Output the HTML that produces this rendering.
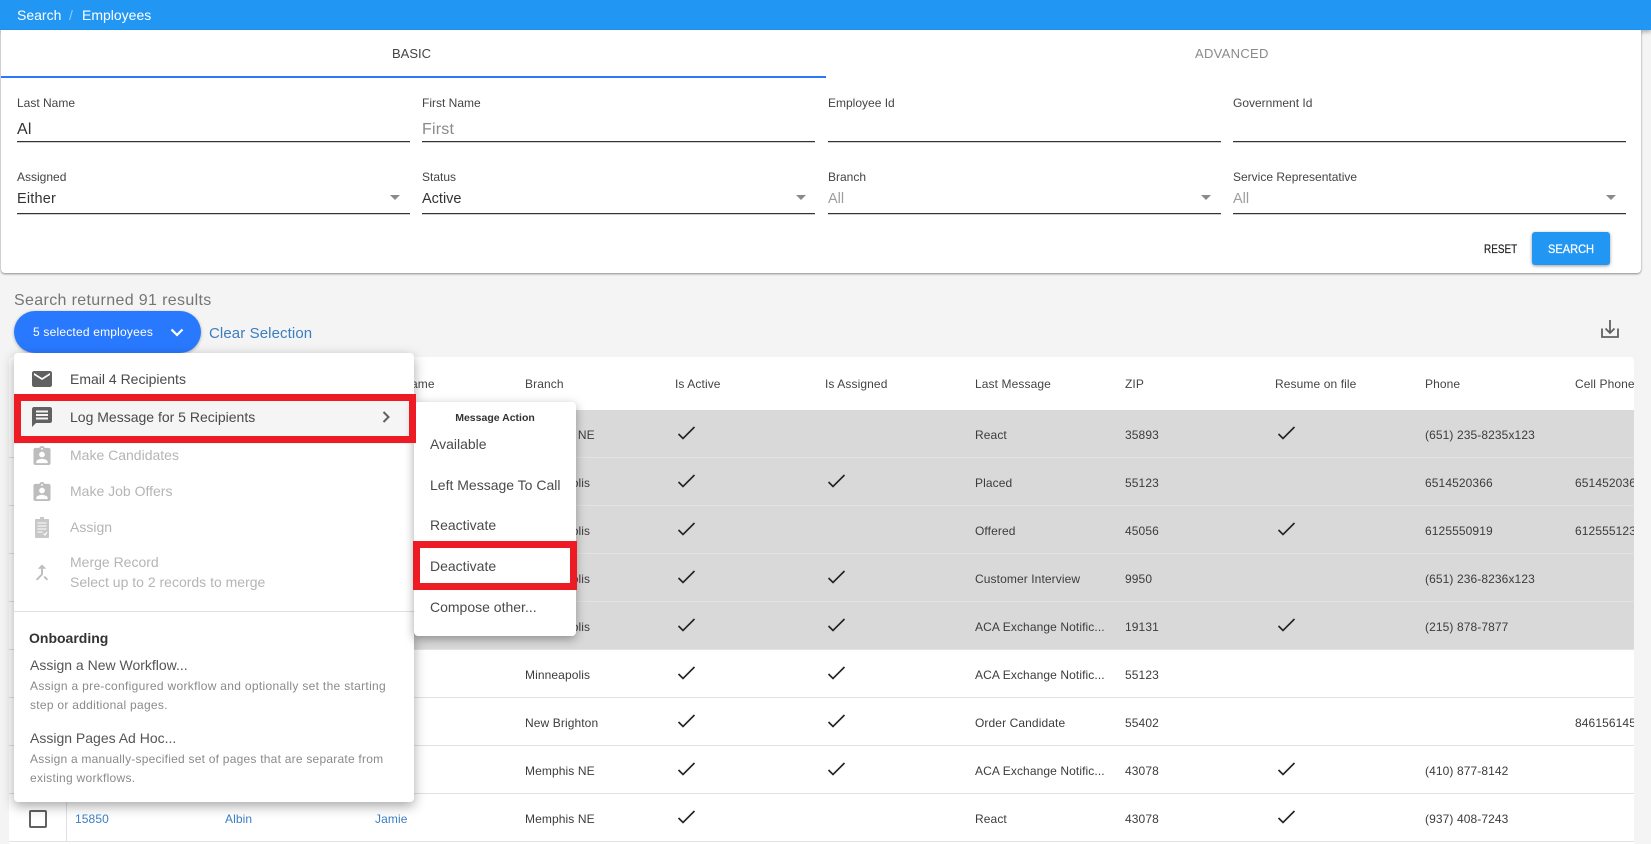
<!DOCTYPE html>
<html><head><meta charset="utf-8"><title>Employees</title>
<style>
html,body{margin:0;padding:0;width:1651px;height:844px;overflow:hidden;background:#f4f4f4;font-family:"Liberation Sans",sans-serif;color:#333}
div,span,svg{position:absolute;display:block}
.t{line-height:20px;white-space:nowrap}
.bar{left:0;top:0;width:1651px;height:30px;background:#2196f3;box-shadow:0 2px 4px rgba(0,0,0,.3);z-index:3}
.card{left:1px;top:30px;width:1640px;height:243px;background:#fff;border-radius:0 0 4px 4px;box-shadow:0 1px 2px rgba(0,0,0,.45);z-index:4}
.l{font-size:12px;color:#444}
.v{font-size:16px;color:#333;letter-spacing:.2px}
.g{color:#9e9e9e}
.u{height:1px;background:#333;width:393px;box-shadow:0 .5px 0 rgba(60,60,60,.5)}
.a{width:0;height:0;border-left:5px solid transparent;border-right:5px solid transparent;border-top:5px solid #8a8a8a}
.table{left:9px;top:357px;width:1625px;height:487px;background:#fff;border-radius:4px 4px 0 0;overflow:hidden}
.h{font-size:12px;letter-spacing:.1px;color:#444}
.r{left:0;width:1625px;height:47px;border-bottom:1.5px solid #e2e2e2}
.s{background:linear-gradient(to right,#fff 57px,#d9d9d9 57px)}
.c{top:15px;font-size:12px;letter-spacing:.1px;color:#3c3c3c;line-height:20px;white-space:nowrap}
.lnk{color:#3b7fc4}
.k{top:16px;width:22px;height:14px}
.menu{left:14px;top:353px;width:400px;height:449px;background:#fff;border-radius:4px;box-shadow:0 4px 12px rgba(0,0,0,.35);z-index:6}
.m{font-size:14px;color:#4a4a4a}
.d{color:#b5b5b5}
.sm{font-size:12px;letter-spacing:.28px;color:#8a8a8a}
.sub{left:414px;top:402px;width:162px;height:234px;background:#fff;border-radius:4px;box-shadow:0 3px 10px rgba(0,0,0,.35);z-index:7}
.red{border-style:solid;border-color:#ed1c24;box-sizing:border-box;z-index:8}
.kp{fill:none;stroke:#222;stroke-width:1.6}
</style></head><body>
<div class="bar">
<span class="t" style="left:17px;top:5px;font-size:14px;color:#fff">Search</span>
<span class="t" style="left:69px;top:5px;font-size:14px;color:#90caf9">/</span>
<span class="t" style="left:82px;top:5px;font-size:14px;color:#fff">Employees</span>
</div>

<div class="card">
<span class="t" style="left:391px;top:14px;font-size:13px;color:#444">BASIC</span>
<span class="t" style="left:1194px;top:14px;font-size:13px;letter-spacing:.3px;color:#8a8a8a">ADVANCED</span>
<div style="left:0;top:46px;width:825px;height:2px;background:#2979ff"></div>

<span class="t l" style="left:16px;top:63px">Last Name</span>
<span class="t l" style="left:421px;top:63px">First Name</span>
<span class="t l" style="left:827px;top:63px">Employee Id</span>
<span class="t l" style="left:1232px;top:63px">Government Id</span>
<span class="t v" style="left:16px;top:90px">Al</span>
<span class="t v g" style="left:421px;top:90px;color:#8a8a8a">First</span>
<div class="u" style="left:16px;top:111px"></div>
<div class="u" style="left:421px;top:111px"></div>
<div class="u" style="left:827px;top:111px"></div>
<div class="u" style="left:1232px;top:111px"></div>

<span class="t l" style="left:16px;top:137px">Assigned</span>
<span class="t l" style="left:421px;top:137px">Status</span>
<span class="t l" style="left:827px;top:137px">Branch</span>
<span class="t l" style="left:1232px;top:137px">Service Representative</span>
<span class="t" style="left:16px;top:159px;font-size:14.5px;letter-spacing:.2px">Either</span>
<span class="t" style="left:421px;top:159px;font-size:14.5px">Active</span>
<span class="t g" style="left:827px;top:159px;font-size:14.5px">All</span>
<span class="t g" style="left:1232px;top:159px;font-size:14.5px">All</span>
<div class="a" style="left:389px;top:165px"></div>
<div class="a" style="left:795px;top:165px"></div>
<div class="a" style="left:1200px;top:165px"></div>
<div class="a" style="left:1605px;top:165px"></div>
<div class="u" style="left:16px;top:183px"></div>
<div class="u" style="left:421px;top:183px"></div>
<div class="u" style="left:827px;top:183px"></div>
<div class="u" style="left:1232px;top:183px"></div>

<span class="t" style="left:1483px;top:209px;font-size:12px;color:#222;-webkit-text-stroke:.2px #222;transform:scaleX(.83);transform-origin:0 50%">RESET</span>
<div style="left:1531px;top:202px;width:78px;height:33px;background:#2196f3;border-radius:3px;box-shadow:0 1px 3px rgba(0,0,0,.4)"></div>
<span class="t" style="left:1547px;top:209px;font-size:12px;color:#fff;-webkit-text-stroke:.25px #fff;transform:scaleX(.92);transform-origin:0 50%">SEARCH</span>
</div>

<span class="t" style="left:14px;top:291px;font-size:16px;letter-spacing:.35px;color:#757575">Search returned 91 results</span>
<div style="left:14px;top:311px;width:187px;height:42px;background:#2979ff;border-radius:21px;box-shadow:0 1px 3px rgba(0,0,0,.3);z-index:5"></div>
<span class="t" style="left:33px;top:322px;font-size:12px;letter-spacing:.2px;color:#fff;z-index:5">5 selected employees</span>
<svg style="left:170px;top:327px;z-index:5" width="14" height="11" viewBox="0 0 14 11"><path d="M1.500 2.500L7 8L12.500 2.500" fill="none" stroke="#fff" stroke-width="2.200"/></svg>
<span class="t" style="left:209px;top:323.500px;font-size:15px;letter-spacing:.1px;color:#3b7ebf">Clear Selection</span>
<svg style="left:1600px;top:319px" width="20" height="20" viewBox="0 0 20 20"><path d="M2 9.500V18H18V9.500M10 1V13.500M5.500 9.500L10 14L14.500 9.500" fill="none" stroke="#616161" stroke-width="1.800"/></svg>

<div class="table">
<span class="t h" style="left:366px;top:9px;line-height:36px">First Name</span>
<span class="t h" style="left:516px;top:9px;line-height:36px">Branch</span>
<span class="t h" style="left:666px;top:9px;line-height:36px">Is Active</span>
<span class="t h" style="left:816px;top:9px;line-height:36px">Is Assigned</span>
<span class="t h" style="left:966px;top:9px;line-height:36px">Last Message</span>
<span class="t h" style="left:1116px;top:9px;line-height:36px">ZIP</span>
<span class="t h" style="left:1266px;top:9px;line-height:36px">Resume on file</span>
<span class="t h" style="left:1416px;top:9px;line-height:36px">Phone</span>
<span class="t h" style="left:1566px;top:9px;line-height:36px">Cell Phone</span>

<div class="r s" style="top:53px">
<span class="c" style="left:516px">Memphis NE</span>
<svg class="k" style="left:666px" viewBox="0 0 22 14"><path class="kp" d="M3.500 8L8 12.500L19.500 1"/></svg>
<span class="c" style="left:966px">React</span><span class="c" style="left:1116px">35893</span>
<svg class="k" style="left:1266px" viewBox="0 0 22 14"><path class="kp" d="M3.500 8L8 12.500L19.500 1"/></svg>
<span class="c" style="left:1416px">(651) 235-8235x123</span>
</div>
<div class="r s" style="top:101px">
<span class="c" style="left:516px">Minneapolis</span>
<svg class="k" style="left:666px" viewBox="0 0 22 14"><path class="kp" d="M3.500 8L8 12.500L19.500 1"/></svg>
<svg class="k" style="left:816px" viewBox="0 0 22 14"><path class="kp" d="M3.500 8L8 12.500L19.500 1"/></svg>
<span class="c" style="left:966px">Placed</span><span class="c" style="left:1116px">55123</span>
<span class="c" style="left:1416px">6514520366</span><span class="c" style="left:1566px">6514520366</span>
</div>
<div class="r s" style="top:149px">
<span class="c" style="left:516px">Minneapolis</span>
<svg class="k" style="left:666px" viewBox="0 0 22 14"><path class="kp" d="M3.500 8L8 12.500L19.500 1"/></svg>
<span class="c" style="left:966px">Offered</span><span class="c" style="left:1116px">45056</span>
<svg class="k" style="left:1266px" viewBox="0 0 22 14"><path class="kp" d="M3.500 8L8 12.500L19.500 1"/></svg>
<span class="c" style="left:1416px">6125550919</span><span class="c" style="left:1566px">6125551234</span>
</div>
<div class="r s" style="top:197px">
<span class="c" style="left:516px">Minneapolis</span>
<svg class="k" style="left:666px" viewBox="0 0 22 14"><path class="kp" d="M3.500 8L8 12.500L19.500 1"/></svg>
<svg class="k" style="left:816px" viewBox="0 0 22 14"><path class="kp" d="M3.500 8L8 12.500L19.500 1"/></svg>
<span class="c" style="left:966px">Customer Interview</span><span class="c" style="left:1116px">9950</span>
<span class="c" style="left:1416px">(651) 236-8236x123</span>
</div>
<div class="r s" style="top:245px">
<span class="c" style="left:516px">Minneapolis</span>
<svg class="k" style="left:666px" viewBox="0 0 22 14"><path class="kp" d="M3.500 8L8 12.500L19.500 1"/></svg>
<svg class="k" style="left:816px" viewBox="0 0 22 14"><path class="kp" d="M3.500 8L8 12.500L19.500 1"/></svg>
<span class="c" style="left:966px">ACA Exchange Notific...</span><span class="c" style="left:1116px">19131</span>
<svg class="k" style="left:1266px" viewBox="0 0 22 14"><path class="kp" d="M3.500 8L8 12.500L19.500 1"/></svg>
<span class="c" style="left:1416px">(215) 878-7877</span>
</div>
<div class="r" style="top:293px">
<span class="c" style="left:516px">Minneapolis</span>
<svg class="k" style="left:666px" viewBox="0 0 22 14"><path class="kp" d="M3.500 8L8 12.500L19.500 1"/></svg>
<svg class="k" style="left:816px" viewBox="0 0 22 14"><path class="kp" d="M3.500 8L8 12.500L19.500 1"/></svg>
<span class="c" style="left:966px">ACA Exchange Notific...</span><span class="c" style="left:1116px">55123</span>
</div>
<div class="r" style="top:341px">
<span class="c" style="left:516px">New Brighton</span>
<svg class="k" style="left:666px" viewBox="0 0 22 14"><path class="kp" d="M3.500 8L8 12.500L19.500 1"/></svg>
<svg class="k" style="left:816px" viewBox="0 0 22 14"><path class="kp" d="M3.500 8L8 12.500L19.500 1"/></svg>
<span class="c" style="left:966px">Order Candidate</span><span class="c" style="left:1116px">55402</span>
<span class="c" style="left:1566px">8461561451</span>
</div>
<div class="r" style="top:389px">
<span class="c" style="left:516px">Memphis NE</span>
<svg class="k" style="left:666px" viewBox="0 0 22 14"><path class="kp" d="M3.500 8L8 12.500L19.500 1"/></svg>
<svg class="k" style="left:816px" viewBox="0 0 22 14"><path class="kp" d="M3.500 8L8 12.500L19.500 1"/></svg>
<span class="c" style="left:966px">ACA Exchange Notific...</span><span class="c" style="left:1116px">43078</span>
<svg class="k" style="left:1266px" viewBox="0 0 22 14"><path class="kp" d="M3.500 8L8 12.500L19.500 1"/></svg>
<span class="c" style="left:1416px">(410) 877-8142</span>
</div>
<div class="r" style="top:437px">
<div style="left:20px;top:16px;width:14px;height:14px;border:2.500px solid #616161;border-radius:2px"></div>
<div style="left:57px;top:0;width:1px;height:48px;background:#e0e0e0"></div>
<span class="c lnk" style="left:66px">15850</span>
<span class="c lnk" style="left:216px">Albin</span>
<span class="c lnk" style="left:366px">Jamie</span>
<span class="c" style="left:516px">Memphis NE</span>
<svg class="k" style="left:666px" viewBox="0 0 22 14"><path class="kp" d="M3.500 8L8 12.500L19.500 1"/></svg>
<span class="c" style="left:966px">React</span><span class="c" style="left:1116px">43078</span>
<svg class="k" style="left:1266px" viewBox="0 0 22 14"><path class="kp" d="M3.500 8L8 12.500L19.500 1"/></svg>
<span class="c" style="left:1416px">(937) 408-7243</span>
</div>
</div>

<div class="menu">
<svg style="left:18px;top:18px" width="20" height="16" viewBox="2 4 20 16"><path fill="#616161" d="M20 4H4c-1.100 0-2 .9-2 2v12c0 1.100.9 2 2 2h16c1.100 0 2-.9 2-2V6c0-1.100-.9-2-2-2zm0 4l-8 5-8-5V6l8 5 8-5v2z"/></svg>
<span class="t m" style="left:56px;top:16px">Email 4 Recipients</span>
<div style="left:0;top:41px;width:400px;height:50px;background:#f5f5f5"></div>
<svg style="left:18px;top:54px" width="20" height="20" viewBox="2 2 20 20"><path fill="#616161" d="M20 2H4c-1.100 0-1.990.9-1.990 2L2 22l4-4h14c1.100 0 2-.9 2-2V4c0-1.100-.9-2-2-2zM6 5.500h12v2H6zM6 9h12v2H6zM6 12.500h12v2H6z" fill-rule="evenodd"/></svg>
<span class="t m" style="left:56px;top:54px">Log Message for 5 Recipients</span>
<svg style="left:368px;top:58px" width="9" height="12" viewBox="0 0 9 12"><path d="M1.500 1L6.500 6L1.500 11" fill="none" stroke="#616161" stroke-width="2"/></svg>

<svg style="left:19px;top:93px" width="18" height="19" viewBox="3 1 18 20"><path fill="#bdbdbd" d="M19 3h-4.180C14.400 1.840 13.300 1 12 1c-1.300 0-2.400.84-2.820 2H5c-1.100 0-2 .9-2 2v14c0 1.100.9 2 2 2h14c1.100 0 2-.9 2-2V5c0-1.100-.9-2-2-2zm-7 0c.55 0 1 .45 1 1s-.45 1-1 1-1-.45-1-1 .45-1 1-1zm0 4c1.660 0 3 1.340 3 3s-1.340 3-3 3-3-1.340-3-3 1.340-3 3-3zm6 12H6v-1.400c0-2 4-3.100 6-3.100s6 1.100 6 3.100V19z"/></svg>
<span class="t m d" style="left:56px;top:92px">Make Candidates</span>
<svg style="left:19px;top:129px" width="18" height="19" viewBox="3 1 18 20"><path fill="#bdbdbd" d="M19 3h-4.180C14.400 1.840 13.300 1 12 1c-1.300 0-2.400.84-2.820 2H5c-1.100 0-2 .9-2 2v14c0 1.100.9 2 2 2h14c1.100 0 2-.9 2-2V5c0-1.100-.9-2-2-2zm-7 0c.55 0 1 .45 1 1s-.45 1-1 1-1-.45-1-1 .45-1 1-1zm0 4c1.660 0 3 1.340 3 3s-1.340 3-3 3-3-1.340-3-3 1.340-3 3-3zm6 12H6v-1.400c0-2 4-3.100 6-3.100s6 1.100 6 3.100V19z"/></svg>
<span class="t m d" style="left:56px;top:128px">Make Job Offers</span>
<svg style="left:21px;top:164px" width="14" height="21" viewBox="0 0 14 21"><path fill="#c8c8c8" d="M5 0h4v2h4.200q.8 0 .8.8v17.400q0 .8-.8.8H.8q-.8 0-.8-.8V2.800q0-.8.8-.8H5z"/><path stroke="#fff" stroke-width="1.100" fill="none" d="M2.500 6h9M2.500 9h9M2.500 12h9M2.500 15h5M8.500 16.500l1.500 1.500 2-3"/></svg>
<span class="t m d" style="left:56px;top:164px">Assign</span>
<svg style="left:21px;top:211px" width="14" height="17" viewBox="5 3 14 18"><path fill="#bdbdbd" d="M17 20.410L18.410 19 15 15.590 13.590 17 17 20.410zM7.500 8H11v5.590L5.590 19 7 20.410l6-6V8h3.500L12 3.500 7.500 8z"/></svg>
<span class="t m d" style="left:56px;top:199px">Merge Record</span>
<span class="t m d" style="left:56px;top:219px">Select up to 2 records to merge</span>
<div style="left:0;top:258px;width:400px;height:1px;background:#e0e0e0"></div>
<span class="t" style="left:15px;top:275px;font-size:14px;font-weight:bold;color:#333">Onboarding</span>
<span class="t m" style="left:16px;top:302px;color:#555">Assign a New Workflow...</span>
<span class="t sm" style="left:16px;top:323px;letter-spacing:.31px">Assign a pre-configured workflow and optionally set the starting</span>
<span class="t sm" style="left:16px;top:342px">step or additional pages.</span>
<span class="t m" style="left:16px;top:375px;color:#555">Assign Pages Ad Hoc...</span>
<span class="t sm" style="left:16px;top:396px;letter-spacing:.23px">Assign a manually-specified set of pages that are separate from</span>
<span class="t sm" style="left:16px;top:415px">existing workflows.</span>
</div>
<div class="red" style="left:14px;top:394px;width:402px;height:49px;border-width:7px"></div>

<div class="sub">
<span class="t" style="left:0;width:162px;text-align:center;top:6px;font-size:10.500px;font-weight:bold;color:#333">Message Action</span>
<span class="t m" style="left:16px;top:32px">Available</span>
<span class="t m" style="left:16px;top:73px">Left Message To Call</span>
<span class="t m" style="left:16px;top:113px">Reactivate</span>
<span class="t m" style="left:16px;top:154px">Deactivate</span>
<span class="t m" style="left:16px;top:195px">Compose other...</span>
</div>
<div class="red" style="left:413px;top:541px;width:164px;height:49px;border-width:7px"></div>
</body></html>
